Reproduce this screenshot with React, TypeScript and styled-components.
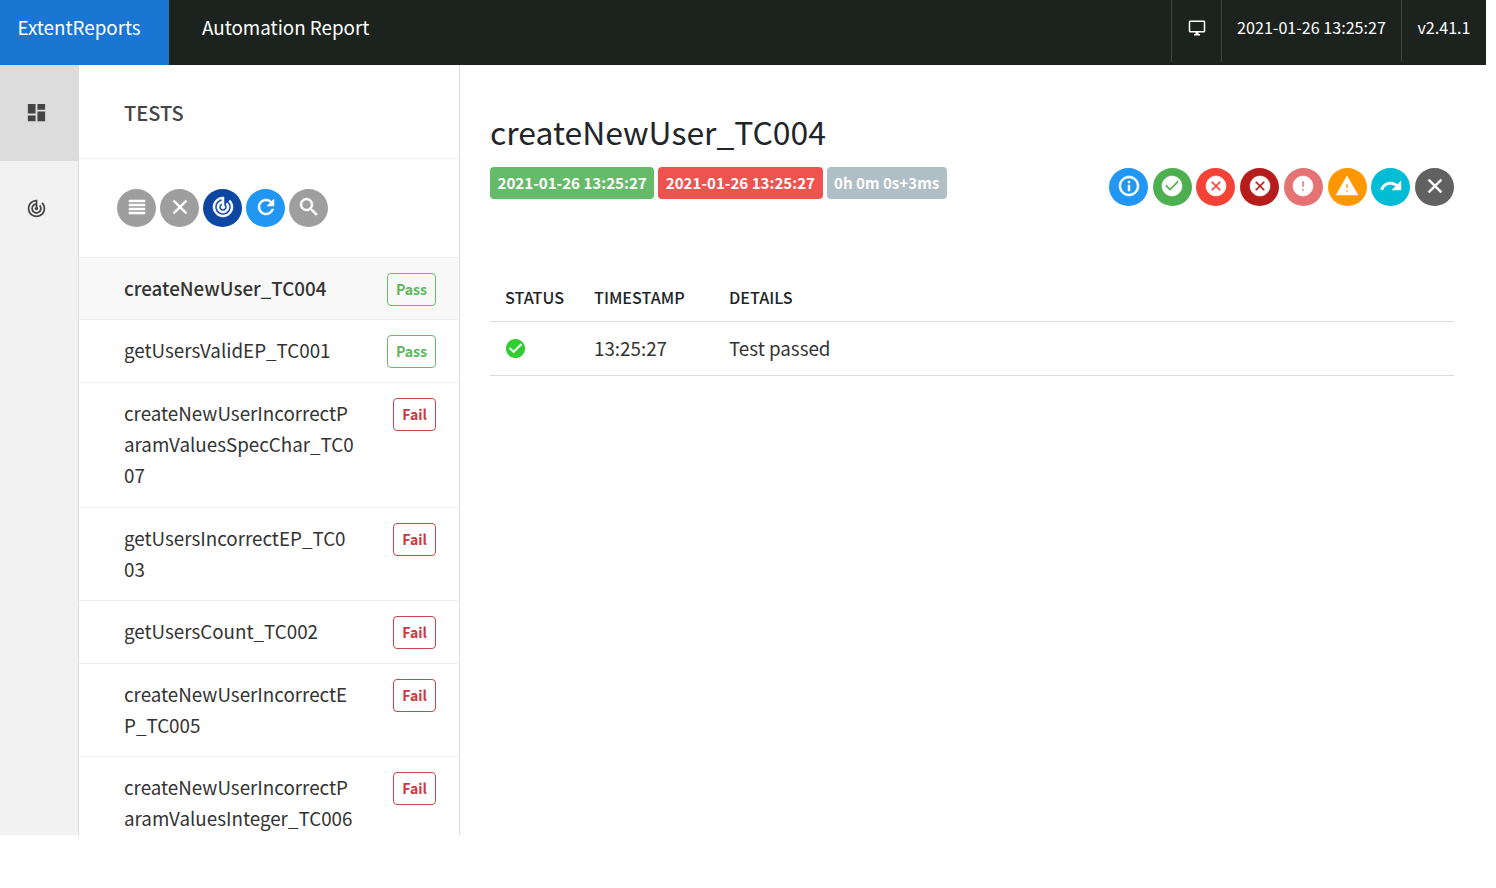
import React from 'react';
import styled, { createGlobalStyle } from 'styled-components';
import {
  MdDashboard, MdTrackChanges, MdViewHeadline, MdClear, MdRefresh, MdSearch,
  MdInfoOutline, MdCheckCircle, MdCancel, MdError, MdWarning, MdRedo, MdOutlineDesktopWindows,
} from 'react-icons/md';

const Global = createGlobalStyle`
  html, body { margin: 0; padding: 0; background: #fff; }
  * { box-sizing: border-box; }
  body { font-family: "Noto Sans CJK SC", "Noto Sans", sans-serif; color: #212529; }
`;

const Page = styled.div`
  width: 1486px;
  height: 835px;
  display: flex;
  flex-direction: column;
  overflow: hidden;
`;
const Nav = styled.header`
  height: 65px;
  flex: none;
  display: flex;
  align-items: stretch;
  background: #1c231f;
  color: #fff;
`;
const Logo = styled.div`
  width: 169px;
  background: #1976d2;
  padding-left: 17.5px;
  font-size: 18.8px;
  line-height: 53px;
`;
const ReportName = styled.div`
  flex: 1;
  padding-left: 33px;
  font-size: 18.8px;
  line-height: 53px;
`;
const NavCell = styled.div<{ $w: number }>`
  width: ${(p) => p.$w}px;
  height: 62px;
  border-left: 1px solid #444;
  display: flex;
  align-items: flex-start;
  justify-content: center;
  padding-top: 16px;
  font-size: 16.1px;
  line-height: 22px;
`;
const MonitorIcon = styled(MdOutlineDesktopWindows)`
  font-size: 18px;
  margin-top: 2.5px;
`;
const Body = styled.div`
  flex: 1;
  min-height: 0;
  display: flex;
`;
const Side = styled.nav`
  width: 79px;
  flex: none;
  background: #f2f2f2;
  border-right: 1px solid #ddd;
`;
const SideItem = styled.div<{ $active?: boolean; $size: number }>`
  height: 96px;
  padding: 0 5px 1px 0;
  display: flex;
  align-items: center;
  justify-content: center;
  color: #444;
  font-size: ${(p) => p.$size}px;
  background: ${(p) => (p.$active ? '#dcdcdc' : 'transparent')};
`;
const ListPanel = styled.aside`
  width: 381px;
  flex: none;
  padding-right: 1px;
  border-right: 1px solid #ddd;
`;
const ListHeader = styled.div`
  height: 94px;
  border-bottom: 1px solid #eee;
  padding: 33px 0 0 45px;
  font-size: 20px;
  line-height: 29px;
  color: #444;
  font-weight: 500;
`;
const Toolbar = styled.div`
  height: 99px;
  border-bottom: 1px solid #eee;
  padding: 30px 0 0 38px;
  display: flex;
  gap: 4px;
  align-items: flex-start;
`;
const Circle = styled.span<{ $bg: string }>`
  width: 39px;
  height: 38px;
  flex: none;
  padding-bottom: 2px;
  border-radius: 50%;
  background: ${(p) => p.$bg};
  color: #fff;
  display: flex;
  align-items: center;
  justify-content: center;
  font-size: 24px;
  svg path:not([fill='none']) {
    stroke: currentColor;
    stroke-width: 0.5;
  }
`;
const TestRow = styled.div<{ $active?: boolean }>`
  display: flex;
  justify-content: space-between;
  align-items: flex-start;
  padding: 14.1px 22px 16.1px 45px;
  border-bottom: 1px solid #eee;
  background: ${(p) => (p.$active ? '#f8f8f8' : '#fff')};
`;
const TestName = styled.div<{ $active?: boolean }>`
  width: 231px;
  font-size: 18.8px;
  line-height: 31.2px;
  word-break: break-all;
  color: #333;
  font-weight: ${(p) => (p.$active ? 500 : 400)};
`;
const StatusTag = styled.span<{ $pass: boolean }>`
  height: 33px;
  flex: none;
  margin: 1px 0 -3px;
  padding: 0 8px;
  border-radius: 4px;
  border: 1px solid ${(p) => (p.$pass ? '#66bb6a' : '#c9474a')};
  color: ${(p) => (p.$pass ? '#5cb85c' : '#c9393e')};
  font-size: 14.1px;
  font-weight: 700;
  line-height: 31px;
`;
const Detail = styled.main`
  flex: 1;
  min-width: 0;
  padding: 44px 32px 0 30px;
`;
const Title = styled.h1`
  margin: 0;
  font-size: 31.9px;
  font-weight: 400;
  line-height: 44px;
  color: #212529;
`;
const MetaRow = styled.div`
  display: flex;
  justify-content: space-between;
  align-items: flex-start;
  margin-top: 14px;
`;
const Chips = styled.div`
  display: flex;
  gap: 4px;
`;
const Chip = styled.span<{ $bg: string }>`
  height: 32px;
  padding: 0 7.5px;
  border-radius: 4px;
  background: ${(p) => p.$bg};
  color: #fff;
  font-size: 15.12px;
  font-weight: 700;
  line-height: 30px;
`;
const Filters = styled.div`
  display: flex;
  gap: 4.71px;
  margin-top: 1px;
`;
const Table = styled.table`
  margin-top: 71px;
  width: 100%;
  border-collapse: collapse;
  table-layout: fixed;
`;
const Th = styled.th<{ $w?: number }>`
  width: ${(p) => (p.$w ? `${p.$w}px` : 'auto')};
  padding: 0 15px 4px;
  height: 44px;
  text-align: left;
  font-size: 16.2px;
  font-weight: 500;
  text-transform: uppercase;
  border-bottom: 1px solid #ddd;
  color: #212529;
`;
const Td = styled.td`
  padding: 0 15px 2px;
  height: 54px;
  font-size: 18.8px;
  border-bottom: 1px solid #ddd;
  color: #333;
`;
const PassIcon = styled(MdCheckCircle)`
  display: block;
  color: #32cd32;
  font-size: 23px;
  margin: 2px 0 0 -1px;
`;

const tests = [
  { name: 'createNewUser_TC004', pass: true, active: true },
  { name: 'getUsersValidEP_TC001', pass: true },
  { name: 'createNewUserIncorrectParamValuesSpecChar_TC007', pass: false },
  { name: 'getUsersIncorrectEP_TC003', pass: false },
  { name: 'getUsersCount_TC002', pass: false },
  { name: 'createNewUserIncorrectEP_TC005', pass: false },
  { name: 'createNewUserIncorrectParamValuesInteger_TC006', pass: false },
];

export default function App() {
  return (
    <Page>
      <Global />
      <Nav>
        <Logo>ExtentReports</Logo>
        <ReportName>Automation Report</ReportName>
        <NavCell $w={50}><MonitorIcon /></NavCell>
        <NavCell $w={180}>2021-01-26 13:25:27</NavCell>
        <NavCell $w={85}>v2.41.1</NavCell>
      </Nav>
      <Body>
        <Side>
          <SideItem $active $size={23}><MdDashboard /></SideItem>
          <SideItem $size={21}><MdTrackChanges /></SideItem>
        </Side>
        <ListPanel>
          <ListHeader>TESTS</ListHeader>
          <Toolbar>
            <Circle $bg="#9e9e9e"><MdViewHeadline /></Circle>
            <Circle $bg="#9e9e9e"><MdClear /></Circle>
            <Circle $bg="#0d47a1"><MdTrackChanges /></Circle>
            <Circle $bg="#2196f3"><MdRefresh /></Circle>
            <Circle $bg="#9e9e9e"><MdSearch /></Circle>
          </Toolbar>
          {tests.map((t) => (
            <TestRow key={t.name} $active={t.active}>
              <TestName $active={t.active}>{t.name}</TestName>
              <StatusTag $pass={t.pass}>{t.pass ? 'Pass' : 'Fail'}</StatusTag>
            </TestRow>
          ))}
        </ListPanel>
        <Detail>
          <Title>createNewUser_TC004</Title>
          <MetaRow>
            <Chips>
              <Chip $bg="#66bb6a">2021-01-26 13:25:27</Chip>
              <Chip $bg="#ef5350">2021-01-26 13:25:27</Chip>
              <Chip $bg="#b0bec5">0h 0m 0s+3ms</Chip>
            </Chips>
            <Filters>
              <Circle $bg="#2196f3"><MdInfoOutline /></Circle>
              <Circle $bg="#4caf50"><MdCheckCircle /></Circle>
              <Circle $bg="#f44336"><MdCancel /></Circle>
              <Circle $bg="#b71c1c"><MdCancel /></Circle>
              <Circle $bg="#e57373"><MdError /></Circle>
              <Circle $bg="#ff9800"><MdWarning /></Circle>
              <Circle $bg="#00bcd4"><MdRedo /></Circle>
              <Circle $bg="#616161"><MdClear /></Circle>
            </Filters>
          </MetaRow>
          <Table>
            <thead>
              <tr>
                <Th $w={89}>Status</Th>
                <Th $w={135}>Timestamp</Th>
                <Th>Details</Th>
              </tr>
            </thead>
            <tbody>
              <tr>
                <Td><PassIcon /></Td>
                <Td>13:25:27</Td>
                <Td>Test passed</Td>
              </tr>
            </tbody>
          </Table>
        </Detail>
      </Body>
    </Page>
  );
}
